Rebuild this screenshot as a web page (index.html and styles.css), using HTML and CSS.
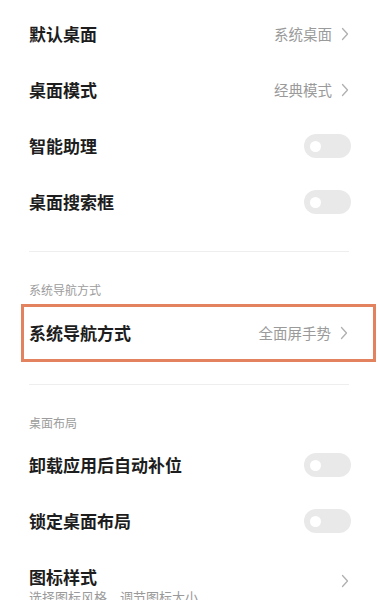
FILE: index.html
```html
<!DOCTYPE html>
<html lang="zh-CN">
<head>
<meta charset="utf-8">
<link rel="stylesheet" href="styles.css">
</head>
<body>
<div class="list">
  <div class="row">
    <span class="title">默认桌面</span>
    <span class="value">系统桌面</span>
    <svg class="chev" viewBox="0 0 8 14"><path d="M1.5 1.5 L6.5 7 L1.5 12.5" /></svg>
  </div>
  <div class="row">
    <span class="title">桌面模式</span>
    <span class="value">经典模式</span>
    <svg class="chev" viewBox="0 0 8 14"><path d="M1.5 1.5 L6.5 7 L1.5 12.5" /></svg>
  </div>
  <div class="row">
    <span class="title">智能助理</span>
    <span class="toggle"><span class="knob"></span></span>
  </div>
  <div class="row">
    <span class="title">桌面搜索框</span>
    <span class="toggle"><span class="knob"></span></span>
  </div>
  <div class="divider first"></div>
  <div class="header">系统导航方式</div>
  <div class="row boxed">
    <span class="title">系统导航方式</span>
    <span class="value">全面屏手势</span>
    <svg class="chev" viewBox="0 0 8 14"><path d="M1.5 1.5 L6.5 7 L1.5 12.5" /></svg>
  </div>
  <div class="divider second"></div>
  <div class="header">桌面布局</div>
  <div class="row">
    <span class="title">卸载应用后自动补位</span>
    <span class="toggle"><span class="knob"></span></span>
  </div>
  <div class="row">
    <span class="title">锁定桌面布局</span>
    <span class="toggle"><span class="knob"></span></span>
  </div>
  <div class="row tall">
    <div class="texts">
      <span class="title">图标样式</span>
      <span class="sub">选择图标风格，调节图标大小</span>
    </div>
    <svg class="chev" viewBox="0 0 8 14"><path d="M1.5 1.5 L6.5 7 L1.5 12.5" /></svg>
  </div>
</div>
</body>
</html>
```

FILE: styles.css
```css
html, body {
  margin: 0;
  padding: 0;
  background: #ffffff;
  font-family: "Noto Sans CJK SC", "Noto Sans", sans-serif;
  overflow: hidden;
}

.list {
  padding: 6px 27px 0 29px;
}

.row {
  height: 56px;
  display: flex;
  align-items: center;
}

.title {
  font-size: 17px;
  font-weight: 700;
  color: #1d1d1d;
  line-height: 22px;
}

.value {
  margin-left: auto;
  font-size: 14.5px;
  color: #9a9a9a;
  line-height: 20px;
}

.chev {
  width: 8px;
  height: 14px;
  margin-left: 9px;
  margin-right: 2px;
  flex: none;
}

.chev path {
  fill: none;
  stroke: #b0b0b0;
  stroke-width: 1.3;
  stroke-linecap: round;
  stroke-linejoin: round;
}

.toggle {
  margin-left: auto;
  width: 47px;
  height: 24px;
  border-radius: 12px;
  background: #e9e9e9;
  display: flex;
  align-items: center;
  padding-left: 6px;
  box-sizing: border-box;
}

.knob {
  width: 11px;
  height: 11px;
  border-radius: 50%;
  background: #ffffff;
}

.divider {
  height: 1px;
  background: #eeeeee;
  margin-right: 2px;
}

.divider.first {
  margin-top: 21px;
}

.divider.second {
  margin-top: 22px;
}

.header {
  font-size: 12px;
  line-height: 16px;
  color: #9c9c9c;
  padding-top: 30px;
  margin-bottom: 6px;
}

.row.boxed {
  height: 52px;
  margin: 0 -25px 0 -8px;
  padding: 0 23px 0 5px;
  border: 3px solid #e2825f;
}

.row.tall {
  height: 70px;
  align-items: flex-start;
  padding-top: 17px;
  box-sizing: border-box;
}

.texts {
  display: flex;
  flex-direction: column;
}

.texts .sub {
  font-size: 13px;
  line-height: 17px;
  color: #9a9a9a;
}

.row.tall .chev {
  margin-left: auto;
  margin-top: 8px;
}
```
